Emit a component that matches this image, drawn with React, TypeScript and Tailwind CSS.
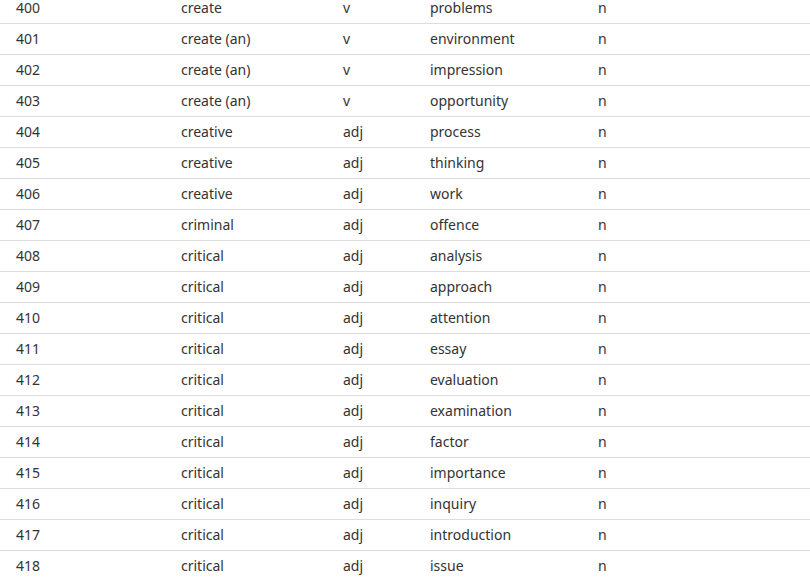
const rows: [number, string, string, string, string][] = [
  [400, 'create', 'v', 'problems', 'n'],
  [401, 'create (an)', 'v', 'environment', 'n'],
  [402, 'create (an)', 'v', 'impression', 'n'],
  [403, 'create (an)', 'v', 'opportunity', 'n'],
  [404, 'creative', 'adj', 'process', 'n'],
  [405, 'creative', 'adj', 'thinking', 'n'],
  [406, 'creative', 'adj', 'work', 'n'],
  [407, 'criminal', 'adj', 'offence', 'n'],
  [408, 'critical', 'adj', 'analysis', 'n'],
  [409, 'critical', 'adj', 'approach', 'n'],
  [410, 'critical', 'adj', 'attention', 'n'],
  [411, 'critical', 'adj', 'essay', 'n'],
  [412, 'critical', 'adj', 'evaluation', 'n'],
  [413, 'critical', 'adj', 'examination', 'n'],
  [414, 'critical', 'adj', 'factor', 'n'],
  [415, 'critical', 'adj', 'importance', 'n'],
  [416, 'critical', 'adj', 'inquiry', 'n'],
  [417, 'critical', 'adj', 'introduction', 'n'],
  [418, 'critical', 'adj', 'issue', 'n'],
];

export default function App() {
  return (
    <div className="w-[810px] h-[581px] overflow-hidden bg-white text-[#333] text-[14px] font-['Noto_Sans',sans-serif]">
      <div className="-mt-[7px]">
        {rows.map((r) => (
          <div
            key={r[0]}
            className="grid grid-cols-[181px_162px_87px_168px_1fr] h-[31px] items-center pb-[1px] border-b border-[#dddddd]"
          >
            <div className="pl-4">{r[0]}</div>
            <div>{r[1]}</div>
            <div>{r[2]}</div>
            <div>{r[3]}</div>
            <div>{r[4]}</div>
          </div>
        ))}
      </div>
    </div>
  );
}
